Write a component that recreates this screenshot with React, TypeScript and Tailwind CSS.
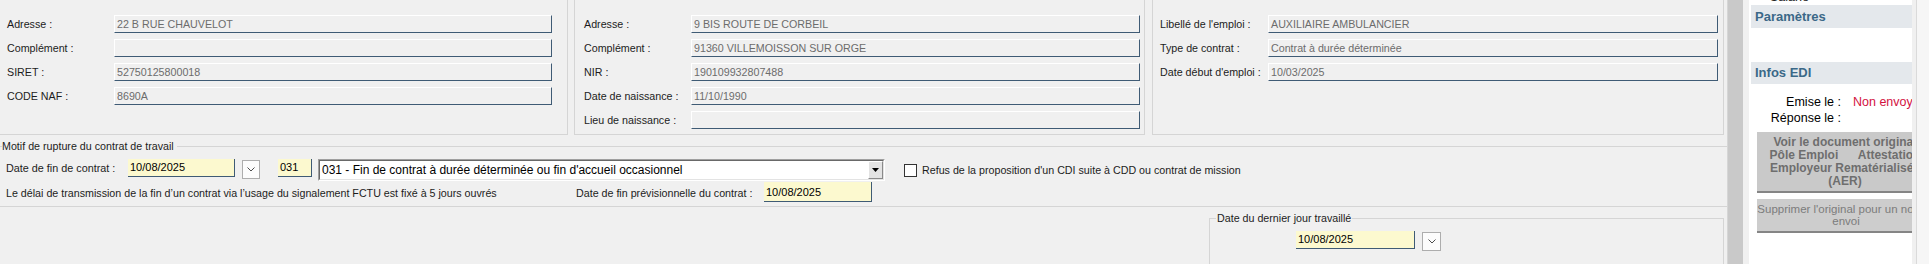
import React from "react";

type Row = [string, string];

const EMPLOYEUR: Row[] = [
  ["Adresse :", "22 B RUE CHAUVELOT"],
  ["Complément :", ""],
  ["SIRET :", "52750125800018"],
  ["CODE NAF :", "8690A"],
];

const SALARIE: Row[] = [
  ["Adresse :", "9 BIS ROUTE DE CORBEIL"],
  ["Complément :", "91360 VILLEMOISSON SUR ORGE"],
  ["NIR :", "190109932807488"],
  ["Date de naissance :", "11/10/1990"],
  ["Lieu de naissance :", ""],
];

const EMPLOI: Row[] = [
  ["Libellé de l'emploi :", "AUXILIAIRE AMBULANCIER"],
  ["Type de contrat :", "Contrat à durée déterminée"],
  ["Date début d'emploi :", "10/03/2025"],
];

function Field({ value, w }: { value: string; w: string }) {
  return (
    <div
      className={`${w} h-[18px] shrink-0 overflow-hidden whitespace-nowrap border border-t-white border-l-white border-r-[#3f5b75] border-b-[#3f5b75] pl-[2px] text-[10.7px] leading-[16px] text-[#6c6c6c]`}
    >
      {value}
    </div>
  );
}

function YellowField({ value, w, h, lh }: { value: string; w: string; h: string; lh: string }) {
  return (
    <div
      className={`${w} ${h} ${lh} shrink-0 whitespace-nowrap border-r border-b border-[#3f5b75] bg-[#fcf9cf] pl-[2px] text-[11px] text-black`}
    >
      {value}
    </div>
  );
}

function DateButton({ extra }: { extra: string }) {
  return (
    <div
      className={`${extra} flex shrink-0 items-center justify-center border border-[#adadad] bg-[#fcfcfc]`}
    >
      <svg width="8" height="5" viewBox="0 0 8 5">
        <path d="M0.5 0.5 L4 4 L7.5 0.5" fill="none" stroke="#4d4d4d" strokeWidth="1" />
      </svg>
    </div>
  );
}

function Panel({ rows, cls, labelW, inputW }: { rows: Row[]; cls: string; labelW: string; inputW: string }) {
  return (
    <div className={`${cls} flex shrink-0 flex-col gap-[6px] border-[#d5d5d5] pt-[15px]`}>
      {rows.map(([label, value]) => (
        <div key={label} className="flex h-[18px] items-center">
          <span className={`${labelW} shrink-0 whitespace-nowrap text-[10.7px] text-[#1c1c1c]`}>{label}</span>
          <Field value={value} w={inputW} />
        </div>
      ))}
    </div>
  );
}

export default function App() {
  return (
    <div className="flex h-[264px] w-[1929px] overflow-hidden bg-[#f0f0f0] font-['Liberation_Sans',Arial,sans-serif]">
      {/* main form */}
      <div className="flex w-[1728px] shrink-0 flex-col border-r border-[#d6d6d6]">
        <div className="flex h-[135px] shrink-0">
          <Panel rows={EMPLOYEUR} cls="w-[568px] border-r border-b pl-[7px]" labelW="w-[107px]" inputW="w-[438px]" />
          <Panel rows={SALARIE} cls="ml-[6px] w-[571px] border-l border-r border-b pl-[9px]" labelW="w-[107px]" inputW="w-[449px]" />
          <Panel rows={EMPLOI} cls="ml-[7px] w-[572px] border-l border-r border-b pl-[7px]" labelW="w-[108px]" inputW="w-[450px]" />
        </div>

        <fieldset className="m-0 mt-[5px] min-w-0 shrink-0 border-t border-b border-[#d5d5d5] p-0 pt-[6px] pb-[3px]">
          <legend className="ml-[2px] pr-[3px] text-[10.7px] leading-[13px] text-[#1c1c1c]">
            Motif de rupture du contrat de travail
          </legend>
          <div className="flex h-[23px] items-start">
            <span className="w-[128px] shrink-0 pl-[6px] text-[10.8px] leading-[18px] text-[#1c1c1c]">
              Date de fin de contrat :
            </span>
            <YellowField value="10/08/2025" w="w-[107px]" h="h-[18px]" lh="leading-[17px]" />
            <DateButton extra="ml-[7px] mt-[1px] h-[19px] w-[18px]" />
            <div className="ml-[18px]">
              <YellowField value="031" w="w-[34px]" h="h-[18px]" lh="leading-[17px]" />
            </div>
            <div className="ml-[6px] h-[22px] w-[567px] shrink-0 border border-t-[#a0a0a0] border-l-[#a0a0a0] border-r-white border-b-white">
              <div className="flex h-full border border-t-[#696969] border-l-[#696969] border-r-[#e3e3e3] border-b-[#e3e3e3] bg-white">
                <span className="flex-1 whitespace-nowrap pl-[2px] text-[12px] leading-[19px] text-black">
                  031 - Fin de contrat à durée déterminée ou fin d&apos;accueil occasionnel
                </span>
                <div className="flex h-full w-[15px] items-center justify-center border border-t-white border-l-white border-r-[#8a8a8a] border-b-[#8a8a8a] bg-[#e3e3e3]">
                  <svg width="7" height="4" viewBox="0 0 7 4">
                    <path d="M0 0 H7 L3.5 4 Z" fill="#000" />
                  </svg>
                </div>
              </div>
            </div>
            <div className="ml-[19px] mt-[5px] h-[13px] w-[13px] shrink-0 border border-[#333333] bg-white" />
            <span className="ml-[5px] whitespace-nowrap text-[10.7px] leading-[23px] text-[#1c1c1c]">
              Refus de la proposition d&apos;un CDI suite à CDD ou contrat de mission
            </span>
          </div>
          <div className="flex h-[21px] items-start">
            <span className="w-[576px] shrink-0 whitespace-nowrap pl-[6px] text-[10.7px] leading-[22px] text-[#1c1c1c]">
              Le délai de transmission de la fin d’un contrat via l’usage du signalement FCTU est fixé à 5 jours ouvrés
            </span>
            <span className="w-[188px] shrink-0 whitespace-nowrap text-[10.7px] leading-[22px] text-[#1c1c1c]">
              Date de fin prévisionnelle du contrat :
            </span>
            <YellowField value="10/08/2025" w="w-[108px]" h="h-[20px]" lh="leading-[20px]" />
          </div>
        </fieldset>

        <div className="flex flex-1 justify-end pr-[3px]">
          <fieldset className="m-0 mt-[5px] h-[80px] w-[515px] min-w-0 shrink-0 border-x border-t border-[#d5d5d5] p-0 pt-[6px]">
            <legend className="ml-[6px] px-[1px] text-[10.7px] leading-[13px] text-[#1c1c1c]">
              Date du dernier jour travaillé
            </legend>
            <div className="flex items-start pl-[86px]">
              <YellowField value="10/08/2025" w="w-[119px]" h="h-[18px]" lh="leading-[17px]" />
              <DateButton extra="ml-[7px] mt-[1px] h-[19px] w-[19px]" />
            </div>
          </fieldset>
        </div>
      </div>

      {/* splitter */}
      <div className="w-[15px] shrink-0 bg-[#c9c9c9]" />
      <div className="w-[6px] shrink-0" />

      {/* side panel */}
      <div className="flex w-[163px] shrink-0 flex-col overflow-hidden bg-white text-[12.5px]">
        <div className="h-[5px] shrink-0 overflow-hidden pl-[21px]">
          <div className="-mt-[10px] leading-[14px] text-[#222]">Salarié</div>
        </div>
        <div className="ml-[2px] h-[23px] shrink-0 bg-[#e4e8ec] pl-[4px] text-[13px] font-bold leading-[23px] text-[#3b6888]">
          Paramètres
        </div>
        <div className="h-[34px] shrink-0" />
        <div className="ml-[2px] h-[22px] shrink-0 bg-[#e4e8ec] pl-[4px] text-[13px] font-bold leading-[22px] text-[#3b6888]">
          Infos EDI
        </div>
        <div className="mt-[10px] flex h-[16px] shrink-0 leading-[16px]">
          <span className="w-[92px] shrink-0 text-right text-black">Emise le :</span>
          <span className="ml-[12px] whitespace-nowrap text-[#d3123f]">Non envoyé</span>
        </div>
        <div className="flex h-[16px] shrink-0 leading-[16px]">
          <span className="w-[92px] shrink-0 text-right text-black">Réponse le :</span>
        </div>
        <div className="ml-[8px] mt-[6px] h-[61px] w-[176px] shrink-0 whitespace-nowrap border-b-2 border-[#858585] bg-[#c9c9c9] pt-[4px] text-center text-[12px] font-bold leading-[13px] text-[#6e6e6e]">
          Voir le document original
          <br />
          Pôle Emploi&nbsp;&nbsp;&nbsp;&nbsp;&nbsp; Attestation
          <br />
          Employeur Rematérialisée
          <br />
          (AER)
        </div>
        <div className="ml-[8px] mt-[6px] flex h-[34px] w-[178px] shrink-0 flex-col justify-center whitespace-nowrap border-b-2 border-[#858585] bg-[#cdcdcd] text-center text-[11.5px] leading-[12px] text-[#7c7c7c]">
          <span>Supprimer l&apos;original pour un nouvel</span>
          <span>envoi</span>
        </div>
      </div>

      <div className="w-[4px] shrink-0" />
      <div className="flex-1 border-l border-[#dadada] bg-[#f6f6f6]" />
    </div>
  );
}
